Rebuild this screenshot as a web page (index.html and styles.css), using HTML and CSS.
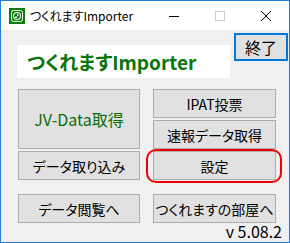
FILE: index.html
```html
<!DOCTYPE html>
<html lang="ja">
<head>
<meta charset="utf-8">
<link rel="stylesheet" href="styles.css">
</head>
<body>
<div class="window">
  <div class="titlebar">
    <svg class="app-icon" width="16" height="16" viewBox="0 0 16 16">
      <rect x="0" y="0" width="16" height="16" fill="#0b7d0b"/>
      <rect x="2.5" y="2.5" width="11" height="11" rx="2" fill="none" stroke="#ffffff" stroke-width="1"/>
      <circle cx="8" cy="8" r="4" fill="#ffffff"/>
      <circle cx="8" cy="8" r="3" fill="#0b7d0b"/>
      <path d="M8 5.5 L10 7.5 L8 8.5 Z" fill="#ffffff"/>
      <rect x="6" y="8.5" width="2" height="1.5" fill="#ffffff"/>
    </svg>
    <span class="title">つくれますImporter</span>
    <div class="controls">
      <span class="ctl"><svg width="10" height="10" viewBox="0 0 10 10"><line x1="0" y1="5.5" x2="10" y2="5.5" stroke="#000" stroke-width="1"/></svg></span>
      <span class="ctl"><svg width="10" height="10" viewBox="0 0 10 10"><rect x="0.5" y="0.5" width="9" height="9" fill="none" stroke="#cccccc" stroke-width="1"/></svg></span>
      <span class="ctl"><svg width="10" height="10" viewBox="0 0 10 10"><path d="M0 0 L10 10 M10 0 L0 10" stroke="#000" stroke-width="1"/></svg></span>
    </div>
  </div>
  <div class="client">
    <div class="header">
      <div class="banner">つくれますImporter</div>
      <button class="btn btn-exit">終了</button>
    </div>
    <div class="grid">
      <button class="btn btn-jv">JV-Data取得</button>
      <button class="btn">IPAT投票</button>
      <button class="btn">速報データ取得</button>
      <button class="btn">データ取り込み</button>
      <div class="highlight"><button class="btn">設定</button></div>
    </div>
    <div class="grid bottom">
      <button class="btn">データ閲覧へ</button>
      <button class="btn">つくれますの部屋へ</button>
    </div>
    <div class="version">v 5.08.2</div>
  </div>
</div>
</body>
</html>
```

FILE: styles.css
```css
html, body {
  margin: 0;
  padding: 0;
  background: #ffffff;
}

.window {
  width: 290px;
  height: 243px;
  box-sizing: border-box;
  border: 1px solid #1f7fd8;
  display: flex;
  flex-direction: column;
  font-family: "Noto Sans CJK JP", "Noto Sans", sans-serif;
  font-feature-settings: "palt";
  overflow: hidden;
}

.titlebar {
  height: 29px;
  background: #ffffff;
  display: flex;
  align-items: center;
  flex-shrink: 0;
}

.app-icon {
  margin-left: 8px;
  margin-top: 1px;
  display: block;
}

.title {
  margin-left: 5px;
  font-size: 12px;
  color: #000000;
  line-height: 14px;
}

.controls {
  margin-left: auto;
  display: flex;
  height: 29px;
}

.ctl {
  width: 46px;
  height: 29px;
  display: flex;
  align-items: center;
  justify-content: center;
}

.ctl svg {
  display: block;
}

.client {
  flex: 1;
  min-height: 0;
  background: #f0f0f0;
  padding: 3px 1px 0 16px;
  display: flex;
  flex-direction: column;
}

.header {
  display: flex;
  align-items: flex-start;
}

.banner {
  margin-top: 12px;
  width: 213px;
  height: 33px;
  box-sizing: border-box;
  background: #ffffff;
  padding-left: 10px;
  font-size: 19px;
  font-weight: bold;
  color: #087508;
  line-height: 33px;
  white-space: nowrap;
}

.btn {
  font-family: "Noto Sans CJK JP", "Noto Sans", sans-serif;
  font-feature-settings: "palt";
  font-size: 14px;
  color: #000000;
  background: #e1e1e1;
  border: 1px solid #adadad;
  padding: 0;
  margin: 0;
  line-height: 1;
  white-space: nowrap;
}

.btn-exit {
  margin-left: auto;
  width: 54px;
  height: 28px;
  border: 2px solid #0078d7;
  font-size: 16px;
}

.grid {
  margin-top: 11px;
  margin-left: 1px;
  display: grid;
  grid-template-columns: 122px 123px;
  grid-template-rows: 29px 29px 29px;
  column-gap: 13px;
  row-gap: 2px;
}

.grid .btn {
  width: 100%;
  height: 100%;
}

.btn-jv {
  grid-row: 1 / span 2;
  color: #0a6e0a;
  font-size: 16px;
}

.highlight {
  position: relative;
}

.highlight::after {
  content: "";
  position: absolute;
  top: -2px;
  bottom: -3px;
  left: -7px;
  right: -6px;
  border: 2px solid #ee0000;
  border-radius: 10px;
  pointer-events: none;
}

.grid.bottom {
  margin-top: 14px;
  grid-template-rows: 29px;
}

.version {
  margin-top: 2px;
  padding-right: 6px;
  text-align: right;
  font-size: 16px;
  line-height: 13px;
  color: #000000;
}
```
